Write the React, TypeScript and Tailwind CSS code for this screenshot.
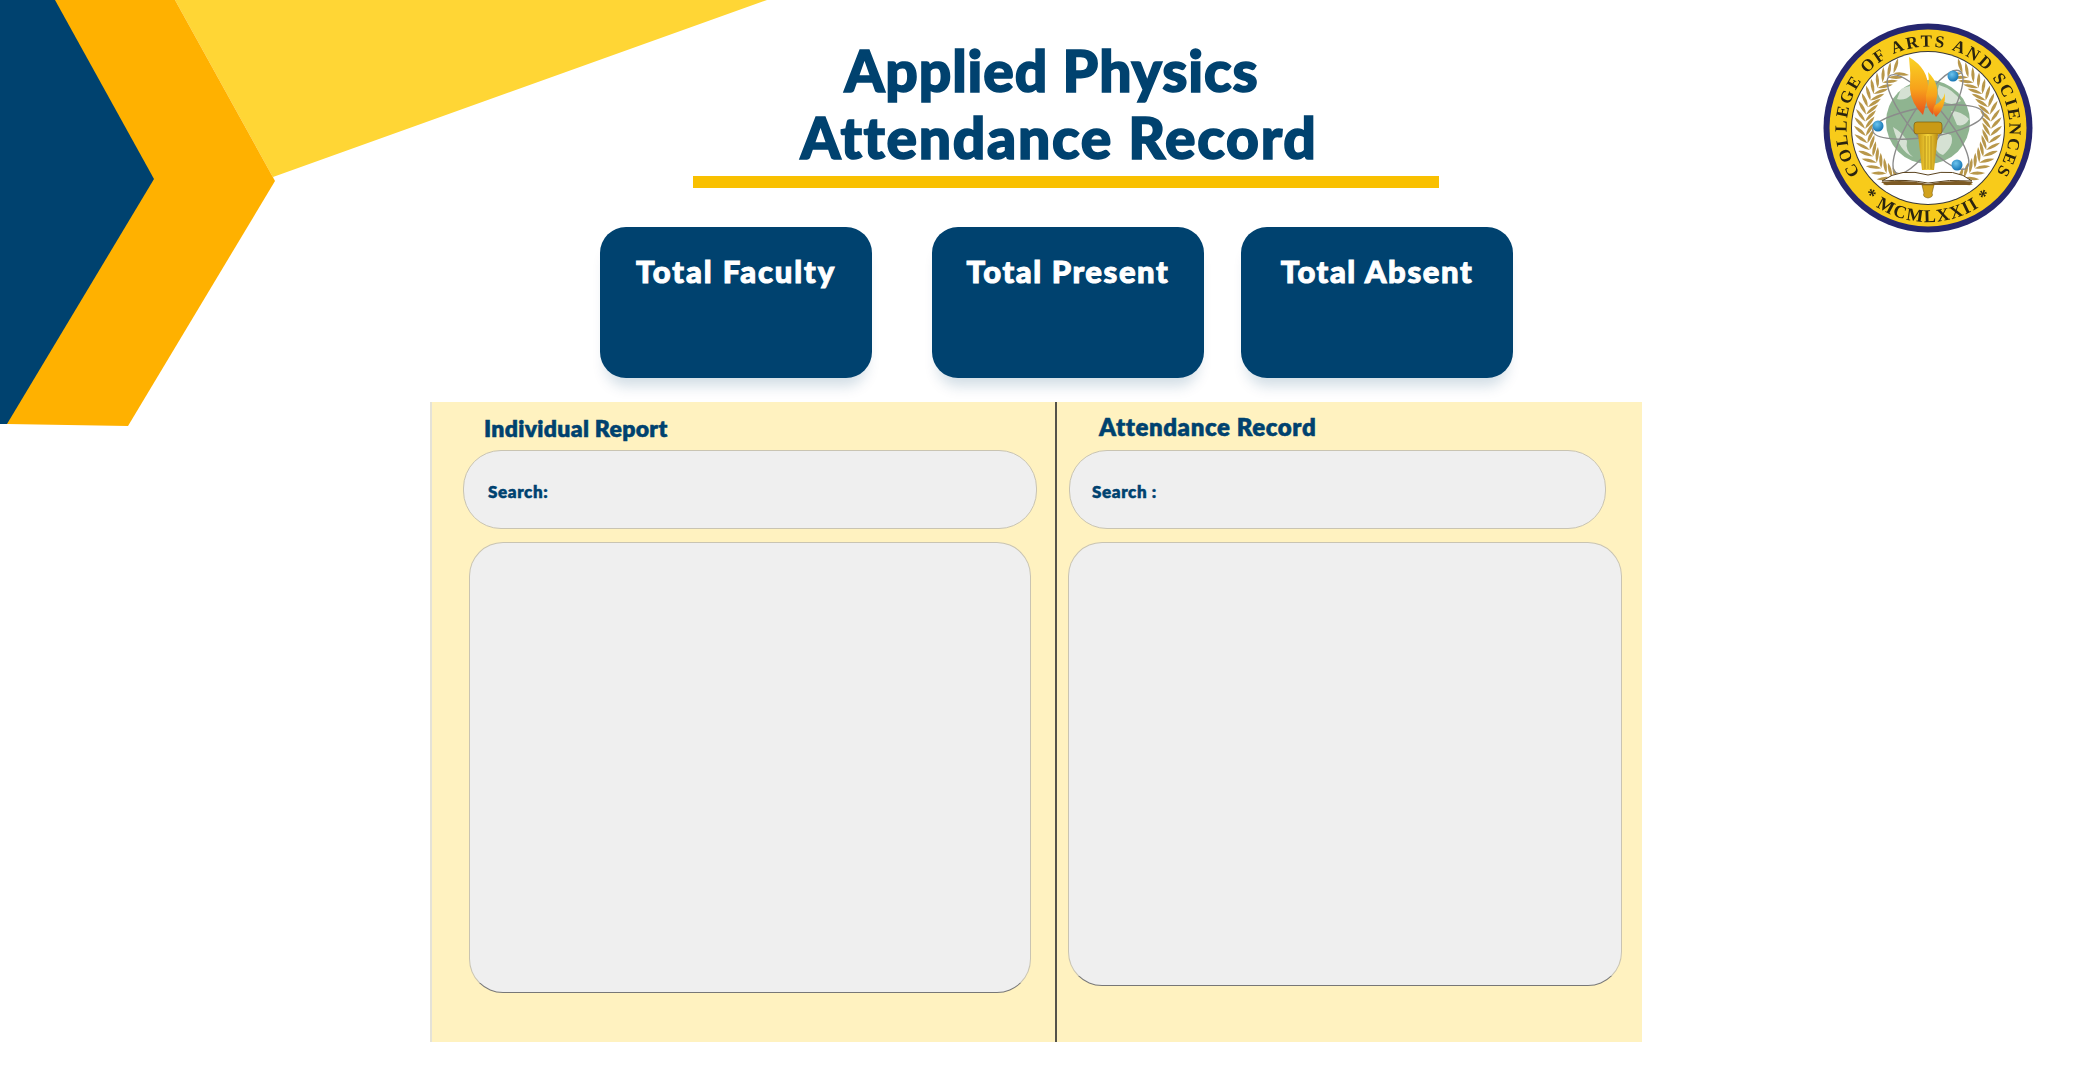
const font = "font-['Lato','Liberation_Sans',sans-serif]";

const leaves = Array.from({ length: 19 }, (_, i) => 118 + i * 6.6);

function Wreath() {
  return (
    <g fill="#B8974A">
      {leaves.map((deg) => {
        const a = (deg * Math.PI) / 180;
        const x = 105 + 63 * Math.cos(a);
        const y = 103 + 63 * Math.sin(a);
        return (
          <g key={deg} transform={`translate(${x} ${y}) rotate(${deg + 90})`}>
            <path d="M0 0 Q 5 -8 12 -10 Q 8 -2 0 0Z" />
            <path d="M0 0 Q 5 8 12 10 Q 8 2 0 0Z" />
          </g>
        );
      })}
    </g>
  );
}

function Logo() {
  return (
    <svg viewBox="0 0 210 210" className="w-[210px] h-[210px] shrink-0 blur-[0.5px]">
      <defs>
        <linearGradient id="flame" x1="0" y1="0" x2="0" y2="1">
          <stop offset="0" stopColor="#F9D423" />
          <stop offset="0.55" stopColor="#F7A21B" />
          <stop offset="1" stopColor="#E8501C" />
        </linearGradient>
        <linearGradient id="col" x1="0" y1="0" x2="1" y2="0">
          <stop offset="0" stopColor="#C99A16" />
          <stop offset="0.5" stopColor="#F5D53A" />
          <stop offset="1" stopColor="#B98A12" />
        </linearGradient>
        <radialGradient id="ball" cx="0.4" cy="0.35" r="0.7">
          <stop offset="0" stopColor="#6CC4EE" />
          <stop offset="1" stopColor="#0F6FB0" />
        </radialGradient>
        <path id="topArc" d="M 37 150 A 81.5 81.5 0 1 1 173 150" />
        <path id="botArc" d="M 32.6 165 A 94 94 0 0 0 177.4 165" />
      </defs>
      <circle cx="105" cy="105" r="104.5" fill="#25266F" />
      <circle cx="105" cy="105" r="98.5" fill="#F8CB1A" />
      <circle cx="105" cy="105" r="77" fill="#3A3A3A" />
      <circle cx="105" cy="105" r="76" fill="#FFFFFF" />
      <text fontFamily="'Liberation Serif',serif" fontSize="17" fontWeight="700" fill="#2A2410">
        <textPath href="#topArc" startOffset="0" textLength="350" lengthAdjust="spacing">COLLEGE OF ARTS AND SCIENCES</textPath>
      </text>
      <text fontFamily="'Liberation Serif',serif" fontSize="18" fontWeight="700" fill="#2A2410" letterSpacing="1.4" textAnchor="middle">
        <textPath href="#botArc" startOffset="50%">* MCMLXXII *</textPath>
      </text>
      <Wreath />
      <g transform="translate(210 0) scale(-1 1)">
        <Wreath />
      </g>
      <circle cx="105" cy="99" r="42" fill="#8FB490" />
      <path d="M78 66 Q90 60 100 64 Q96 72 88 72 Q82 78 74 76Z M116 62 Q130 66 138 78 Q128 84 120 78 Q112 72 116 62Z M70 104 Q80 110 84 118 Q82 128 90 134 Q76 128 70 104Z M108 114 Q116 106 128 112 Q132 122 120 132 Q112 130 108 114Z M128 88 Q138 88 146 96 Q142 104 134 102Z" fill="#D5E1D3" />
      <g fill="none" stroke="#8B8B8B" strokeWidth="1.4">
        <ellipse cx="105" cy="99" rx="56" ry="15" transform="rotate(-9 105 99)" />
        <ellipse cx="105" cy="99" rx="60" ry="17" transform="rotate(-58 105 99)" />
        <ellipse cx="105" cy="99" rx="60" ry="17" transform="rotate(50 105 99)" />
      </g>
      <circle cx="130" cy="53" r="5.5" fill="url(#ball)" />
      <circle cx="55" cy="103" r="5.5" fill="url(#ball)" />
      <circle cx="134" cy="142" r="5.5" fill="url(#ball)" />
      <path d="M86 34 Q106 46 105 66 Q104 78 100 92 Q88 80 87 66 Q88 50 86 34Z" fill="url(#flame)" />
      <path d="M105 49 Q118 62 113 78 Q112 86 110 92 Q102 84 103 72 Q107 60 105 49Z" fill="url(#flame)" />
      <path d="M122 70 Q123 84 113 94 Q108 88 112 82 Q120 78 122 70Z" fill="url(#flame)" />
      <rect x="91" y="99" width="28" height="12" rx="3" fill="#C99A16" stroke="#7A5E10" strokeWidth="0.7" />
      <path d="M95 111 H115 L111 147 H99Z" fill="url(#col)" />
      <path d="M102 113 V146 M105 113 V146 M108 113 V146" stroke="#A67F12" strokeWidth="0.7" />
      <path d="M59 158 Q78 144 105 152 Q132 144 149 158 Q126 156 105 160 Q84 156 59 158Z" fill="#FFFFFF" stroke="#5B4420" strokeWidth="1" />
      <path d="M58 159 Q84 156 105 161 Q126 156 150 159 L147 162 H63Z" fill="#7C5A25" />
      <path d="M99 162 H111 L109 170 Q111 174 105 175 Q99 174 101 170Z" fill="#D1A21E" stroke="#7A5E10" strokeWidth="0.6" />
    </svg>
  );
}

function Card({ title, className }: { title: string; className: string }) {
  return (
    <div className={`w-[272px] h-[151px] rounded-[26px] bg-[#00426F] shadow-[0_14px_14px_-6px_rgba(0,66,111,0.18)] pt-[22px] text-center text-white text-[31px] leading-[44px] font-black [-webkit-text-stroke:1px_#ffffff] [font-variant-ligatures:none] ${className}`}>
      {title}
    </div>
  );
}

function Search({ width, ml, pl, label }: { width: string; ml: string; pl: string; label: string }) {
  return (
    <div className={`${width} ${ml} ${pl} h-[79px] rounded-[38px] bg-[#EFEFEF] border border-[#C9C4B2] flex items-center pt-[4px] text-[17px] font-extrabold text-[#00426F] tracking-[0.6px] [-webkit-text-stroke:0.4px_#00426F]`}>
      {label}
    </div>
  );
}

export default function App() {
  return (
    <div className={`relative w-[2080px] h-[1080px] overflow-hidden bg-white ${font}`}>
      <svg viewBox="0 0 800 440" className="absolute left-0 top-0 w-[800px] h-[440px]">
        <polygon points="175,0 767,0 273,177 275,181" fill="#FFD635" />
        <polygon points="55,0 175,0 275,181 128,426 7,424" fill="#FFB100" />
        <polygon points="0,0 55,0 154,179 7,424 0,424" fill="#00426F" />
      </svg>

      <div className="relative flex flex-col">
        <header className="flex h-[188px] pl-[693px]">
          <div className="w-[746px] flex flex-col items-center text-[#00426F] font-black [-webkit-text-stroke:1.6px_#00426F] [font-variant-ligatures:none]">
            <h1 className="mt-[37px] text-[57px] leading-[67px] pr-[29px] tracking-[0.9px]">Applied Physics</h1>
            <h1 className="text-[57px] leading-[67px] pr-[14px] tracking-[1.7px]">Attendance Record</h1>
            <div className="mt-auto w-full h-[12px] bg-[#F9C000]" />
          </div>
          <div className="ml-[384px] mt-[23px]">
            <Logo />
          </div>
        </header>

        <section className="flex mt-[39px] pl-[600px]">
          <Card title="Total Faculty" className="tracking-[1.9px]" />
          <Card title="Total Present" className="ml-[60px] tracking-[1.6px]" />
          <Card title="Total Absent" className="ml-[37px] tracking-[1.6px]" />
        </section>

        <main className="flex mt-[24px] ml-[430px] w-[1212px] h-[640px] bg-[#FFF2C0] border-l-2 border-l-[#E4E2D8]">
          <div className="w-[625px] border-r-2 border-r-[#55534A] shrink-0">
            <h2 className="pl-[52px] pt-[12px] text-[23px] leading-[29px] font-extrabold text-[#00426F] tracking-[0.3px] h-[48px] [-webkit-text-stroke:0.5px_#00426F]">Individual Report</h2>
            <Search width="w-[574px]" ml="ml-[31px]" pl="pl-[24px]" label="Search:" />
            <div className="mt-[13px] ml-[37px] w-[562px] h-[451px] rounded-[34px] bg-[#EFEFEF] border border-[#C9C4B2] border-b-[#777777]" />
          </div>
          <div className="flex-1">
            <h2 className="pl-[42px] pt-[10px] text-[24px] leading-[29px] font-extrabold text-[#00426F] tracking-[0.6px] h-[48px] [-webkit-text-stroke:0.5px_#00426F] [font-variant-ligatures:none]">Attendance Record</h2>
            <Search width="w-[537px]" ml="ml-[12px]" pl="pl-[22px]" label="Search :" />
            <div className="mt-[13px] ml-[11px] w-[554px] h-[444px] rounded-[34px] bg-[#EFEFEF] border border-[#C9C4B2] border-b-[#777777]" />
          </div>
        </main>
      </div>
    </div>
  );
}
